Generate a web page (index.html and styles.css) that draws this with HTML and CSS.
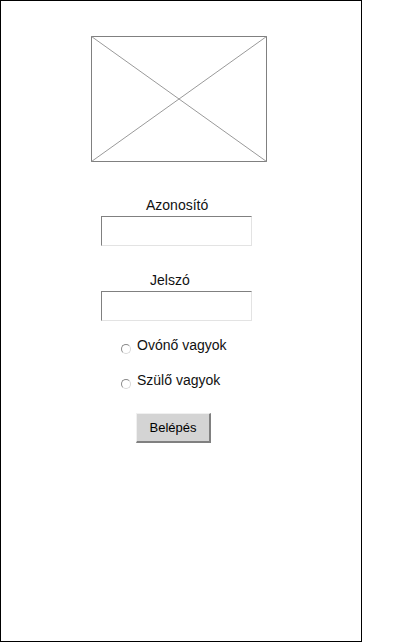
FILE: index.html
```html
<!DOCTYPE html>
<html lang="hu">
<head>
    <meta charset="UTF-8">
    <meta name="viewport" content="width=device-width, initial-scale=1.0">
    <title>Belépés</title>
    <link rel="stylesheet" href="styles.css">
</head>
<body>
    <div class="frame">
        <svg class="logo" width="176" height="126" viewBox="0 0 176 126">
            <rect x="0.5" y="0.5" width="175" height="125" fill="#fff" stroke="#808080" stroke-width="1"/>
            <line x1="0.5" y1="0.5" x2="175.5" y2="125.5" stroke="#9a9a9a" stroke-width="1"/>
            <line x1="175.5" y1="0.5" x2="0.5" y2="125.5" stroke="#9a9a9a" stroke-width="1"/>
        </svg>

        <div class="label label-id">Azonosító</div>
        <input type="text" class="field field-id">

        <div class="label label-pass">Jelszó</div>
        <input type="password" class="field field-pass">

        <label class="choice choice-first">
            <span class="radio"></span>
            <span>Ovónő vagyok</span>
        </label>
        <label class="choice choice-second">
            <span class="radio"></span>
            <span>Szülő vagyok</span>
        </label>

        <button class="button">Belépés</button>
    </div>
</body>
</html>
```

FILE: styles.css
```css
body {
    margin: 0;
    background-color: #fff;
    font-family: "Liberation Sans", Arial, sans-serif;
    color: #000;
}
.frame {
    width: 362px;
    height: 642px;
    box-sizing: border-box;
    border: 1px solid #000;
    display: flex;
    flex-direction: column;
    align-items: flex-start;
}
.logo {
    display: block;
    margin: 35px 0 0 90px;
}
.label {
    font-size: 14px;
    line-height: 16px;
    color: #111;
}
.label-id {
    margin: 35px 0 0 145px;
}
.label-pass {
    margin: 26px 0 0 149px;
}
.field {
    width: 151px;
    height: 30px;
    box-sizing: border-box;
    margin: 3px 0 0 100px;
    padding: 0 4px;
    border-top: 1px solid #808080;
    border-left: 1px solid #808080;
    border-right: 1px solid #e3e3e3;
    border-bottom: 1px solid #e3e3e3;
    background-color: #fff;
    font-family: "Liberation Sans", Arial, sans-serif;
    font-size: 13px;
    outline: none;
}
.choice {
    display: flex;
    align-items: flex-start;
    gap: 6px;
    margin-left: 120px;
    font-size: 14px;
    line-height: 16px;
    color: #111;
}
.choice-first {
    margin-top: 16px;
}
.choice-second {
    margin-top: 18px;
}
.radio {
    width: 10px;
    height: 10px;
    box-sizing: border-box;
    margin-top: 7px;
    border-radius: 50%;
    border-top: 1px solid #8a8a8a;
    border-left: 1px solid #8a8a8a;
    border-right: 1px solid #d8d8d8;
    border-bottom: 1px solid #d8d8d8;
    background-color: #fff;
}
.button {
    width: 75px;
    height: 30px;
    margin: 24px 0 0 135px;
    padding: 0;
    font-family: "Liberation Sans", Arial, sans-serif;
    font-size: 13px;
    color: #000;
    background-color: #d4d4d4;
    border-top: 1px solid #f0f0f0;
    border-left: 1px solid #f0f0f0;
    border-right: 2px solid #808080;
    border-bottom: 2px solid #808080;
    cursor: pointer;
}
```
